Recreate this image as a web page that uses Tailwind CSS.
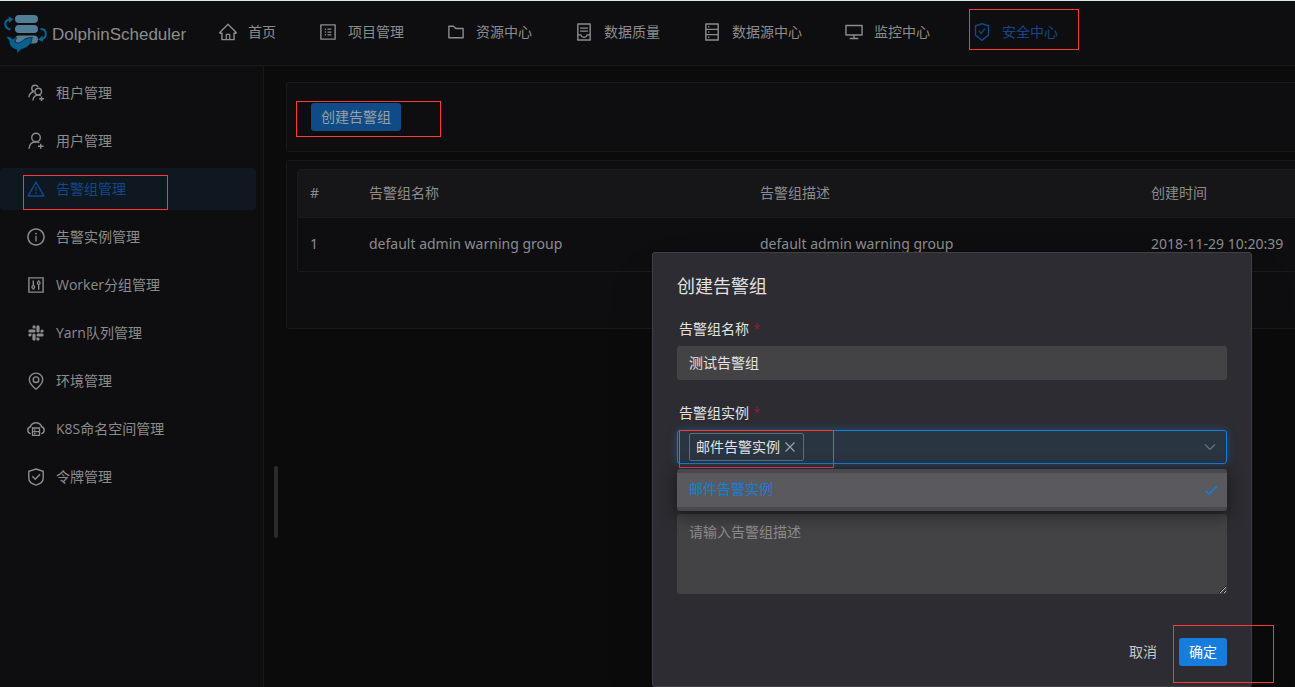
<!DOCTYPE html>
<html lang="zh-CN">
<head>
<meta charset="utf-8">
<meta name="viewport" content="width=device-width, initial-scale=1">
<title>DolphinScheduler</title>
<script src="https://cdn.jsdelivr.net/npm/@tailwindcss/browser@4"></script>
</head>
<body class="relative flex h-screen flex-col overflow-hidden border-t border-[#dfe6e6] bg-[#0b0b0b] font-['Open_Sans','Noto_Sans_CJK_SC',sans-serif] text-sm text-[#8c8c8d]">

<!-- Top bar -->
<header class="flex h-[65px] shrink-0 items-center border-b border-[#1a1a1c] bg-[#0e0e10] pb-0.5">
  <a href="#" class="flex w-[218px] shrink-0 items-center gap-1 pl-1 pt-0.5 font-['Liberation_Sans',sans-serif] text-[17px]">
    <svg class="h-11 w-11" viewBox="0 0 44 44" aria-hidden="true">
      <g fill="#527d94">
        <rect x="11" y="4" width="23" height="8" rx="4"/>
        <rect x="11" y="14" width="23" height="8" rx="4"/>
        <rect x="11" y="24.500" width="23" height="8" rx="4"/>
      </g>
      <path d="M6.500 18.500C-.5 17-.5 9 6 8.500M36.500 18c6.500 0 7.500 8.500.500 10.500" fill="none" stroke="#0a618f" stroke-width="2"/>
      <path d="M4.500 5.500 9.500 8 5 12zM38.500 24.500 34 28.500l5 2.500z" fill="#0a618f"/>
      <path d="M2 25c3 .3 5.500 1.500 6.500 3.200 1.500-.9 3-1.400 4-1.700-.3 1.800-1 2.800-2 3.800 2 2.700 5.500 1.700 8.500-.8 1.500-1.500 3.500-2.500 6-2.700 1.300-.3 2.500-.5 3.500-.3-.5.700-.6 1.500-.6 2.200-.9 4.300-3.500 7-7.400 8.600-1 .6-2.500.9-3.500 1.200-1.500 1.500-2.200 2.500-3.500 4-.6-1.300-.8-2.500-.7-3.700C8.500 38 5 34.500 5.300 30 4 28.500 2.800 27 2 25z" fill="#0a618f" stroke="#0e0e10" stroke-width=".6"/>
    </svg>
    <span class="pt-1">DolphinScheduler</span>
  </a>
  <nav class="flex items-center gap-[42px] whitespace-nowrap" aria-label="主导航">
    <a href="#" class="flex items-center gap-2.5">
      <svg class="size-5" viewBox="0 0 1024 1024" fill="currentColor" aria-hidden="true"><path d="M946.500 505L534.200 92.900a31.500 31.500 0 0 0-44.400 0L77.500 505a63.900 63.900 0 0 0-18.800 46c.4 35.200 29.700 63.300 64.900 63.300h42.500V940h691.800V614.300h43.400c17.100 0 33.200-6.700 45.300-18.800a63.600 63.600 0 0 0 18.700-45.300c0-17-6.700-33.100-18.800-45.200zM568 868H456V664h112v204zm217.900-325.700V868H632V640c0-22.100-17.900-40-40-40H432c-22.100 0-40 17.900-40 40v228H238.100V542.300h-96l370-369.700L882 542.300h-96.100z"/></svg>
      <span>首页</span>
    </a>
    <a href="#" class="flex items-center gap-2.5">
      <svg class="size-5" viewBox="0 0 1024 1024" fill="currentColor" aria-hidden="true"><path d="M880 112H144c-17.700 0-32 14.300-32 32v736c0 17.700 14.300 32 32 32h736c17.700 0 32-14.300 32-32V144c0-17.700-14.300-32-32-32zm-40 728H184V184h656v656zM484 336h200v64H484zM484 480h200v64H484zM484 624h200v64H484zM340 368a40 40 0 1 0 80 0 40 40 0 1 0-80 0zm0 144a40 40 0 1 0 80 0 40 40 0 1 0-80 0zm0 144a40 40 0 1 0 80 0 40 40 0 1 0-80 0z"/></svg>
      <span>项目管理</span>
    </a>
    <a href="#" class="flex items-center gap-2.5">
      <svg class="size-5" viewBox="0 0 1024 1024" fill="currentColor" aria-hidden="true"><path d="M880 298.400H521L403.700 186.200a8.150 8.150 0 0 0-5.500-2.200H144c-17.700 0-32 14.300-32 32v592c0 17.700 14.300 32 32 32h736c17.700 0 32-14.300 32-32V330.400c0-17.700-14.300-32-32-32zM840 768H184V256h188.500l119.600 114.400H840V768z"/></svg>
      <span>资源中心</span>
    </a>
    <a href="#" class="flex items-center gap-2.5">
      <svg class="size-5" viewBox="0 0 1024 1024" fill="currentColor" aria-hidden="true"><path d="M832 64H192c-17.700 0-32 14.300-32 32v832c0 17.700 14.300 32 32 32h640c17.700 0 32-14.300 32-32V96c0-17.700-14.300-32-32-32zm-40 824H232V687h97.900c11.600 32.800 32 62.300 59.100 84.700 34.500 28.500 78.200 44.300 123 44.300s88.500-15.700 123-44.300c27.100-22.400 47.500-51.900 59.100-84.700H792v201zm0-264H643.600l-5.200 24.700C626.400 708.500 573.200 752 512 752s-114.400-43.500-126.500-103.300l-5.200-24.700H232V136h560v488zM312 277h400v64H312zM312 437h400v64H312z"/></svg>
      <span>数据质量</span>
    </a>
    <a href="#" class="flex items-center gap-2.5">
      <svg class="size-5" viewBox="0 0 1024 1024" fill="currentColor" aria-hidden="true"><path d="M832 64H192c-17.700 0-32 14.300-32 32v832c0 17.700 14.300 32 32 32h640c17.700 0 32-14.300 32-32V96c0-17.700-14.300-32-32-32zm-600 72h560v208H232V136zm560 480H232V408h560v208zm0 272H232V680h560v208zM304 240a40 40 0 1 0 80 0 40 40 0 1 0-80 0zm0 272a40 40 0 1 0 80 0 40 40 0 1 0-80 0zm0 272a40 40 0 1 0 80 0 40 40 0 1 0-80 0z"/></svg>
      <span>数据源中心</span>
    </a>
    <a href="#" class="flex items-center gap-2.5">
      <svg class="size-5" viewBox="0 0 1024 1024" fill="currentColor" aria-hidden="true"><path d="M928 140H96c-17.700 0-32 14.300-32 32v496c0 17.700 14.300 32 32 32h380v112H304c-8.800 0-16 7.200-16 16v48c0 4.400 3.600 8 8 8h432c4.400 0 8-3.600 8-8v-48c0-8.800-7.200-16-16-16H548V700h380c17.700 0 32-14.300 32-32V172c0-17.700-14.300-32-32-32zm-40 488H136V212h752v416z"/></svg>
      <span>监控中心</span>
    </a>
    <a href="#" class="relative flex items-center gap-2.5 text-[#10498a]" aria-current="page">
      <svg class="size-5" viewBox="0 0 1024 1024" fill="currentColor" aria-hidden="true"><path d="M866.900 169.900L527.100 54.100C523 52.700 517.500 52 512 52s-11 .7-15.100 2.100L157.100 169.900c-8.300 2.800-15.100 12.400-15.100 21.200v482.400c0 8.800 5.700 20.400 12.600 25.900L499.300 968c3.500 2.700 8 4.100 12.600 4.100s9.200-1.400 12.600-4.100l344.700-268.600c6.900-5.400 12.600-17 12.600-25.900V191.100c.2-8.800-6.600-18.300-14.900-21.200zM810 654.300L512 886.500 214 654.300V226.700l298-101.600 298 101.600v427.600zm-405.800-201c-3-4.100-7.800-6.600-13-6.600H336c-6.500 0-10.300 7.400-6.500 12.700l126.400 174a16.100 16.100 0 0 0 26 0l212.600-292.700c3.800-5.300 0-12.700-6.500-12.700h-55.200c-5.100 0-10 2.500-13 6.600L468.900 542.400l-64.700-89.100z"/></svg>
      <span>安全中心</span>
      <span class="pointer-events-none absolute -left-[3px] -right-[21px] -top-[13px] h-[41px] border border-[#ff3a36]"></span>
    </a>
  </nav>
</header>

<div class="flex min-h-0 flex-1">
  <!-- Side menu -->
  <aside class="w-[264px] shrink-0 border-r border-[#1a1a1c] bg-[#0e0e10] pr-[7px] pt-1.5">
    <nav class="flex flex-col gap-1.5" aria-label="安全中心">
      <a href="#" class="flex h-[42px] items-center gap-2.5 pl-[26px]">
        <svg class="size-5" viewBox="0 0 20 20" fill="none" stroke="currentColor" stroke-width="1.400" aria-hidden="true"><circle cx="12.200" cy="8.600" r="3.300"/><path d="M6.900 17.500c.3-3.200 2.200-5.400 5.300-5.400 1 0 1.900.2 2.600.6M15.500 13.500v4.600M13.200 15.800h4.700M12.200 3.900C11.500 2.800 10.500 2.200 9.200 2.200c-2 0-3.400 1.400-3.400 3.200 0 1.500.9 2.700 2.300 3.100C5 9.200 3.200 11.300 2.900 14.300"/></svg>
        <span>租户管理</span>
      </a>
      <a href="#" class="flex h-[42px] items-center gap-2.5 pl-[26px]">
        <svg class="size-5" viewBox="0 0 20 20" fill="none" stroke="currentColor" stroke-width="1.400" aria-hidden="true"><circle cx="10" cy="6.500" r="4.300"/><path d="M3 17.700c.4-4.200 3-6.900 7-6.900 1.300 0 2.400.3 3.400.8M14.700 12.800v5M12 15.300h5.500"/></svg>
        <span>用户管理</span>
      </a>
      <a href="#" class="relative flex h-[42px] items-center gap-2.5 rounded-[3px] bg-[#0f1720] pl-[26px] text-[#10498a]" aria-current="page">
        <svg class="size-5" viewBox="0 0 1024 1024" fill="currentColor" aria-hidden="true"><path d="M464 720a48 48 0 1 0 96 0 48 48 0 1 0-96 0zm16-304v184c0 4.400 3.600 8 8 8h48c4.400 0 8-3.600 8-8V416c0-4.400-3.600-8-8-8h-48c-4.400 0-8 3.600-8 8zm475.700 440l-416-720c-6.200-10.700-16.900-16-27.700-16s-21.600 5.300-27.700 16l-416 720C56 877.400 71.400 904 96 904h832c24.600 0 40-26.600 27.700-48zm-783.500-27.900L512 239.900l339.800 588.200H172.200z"/></svg>
        <span>告警组管理</span>
        <span class="pointer-events-none absolute left-[23px] top-[7px] h-[35px] w-[145px] border border-[#ff3a36]"></span>
      </a>
      <a href="#" class="flex h-[42px] items-center gap-2.5 pl-[26px]">
        <svg class="size-5" viewBox="0 0 1024 1024" fill="currentColor" aria-hidden="true"><path d="M512 64C264.600 64 64 264.600 64 512s200.600 448 448 448 448-200.600 448-448S759.400 64 512 64zm0 820c-205.400 0-372-166.600-372-372s166.600-372 372-372 372 166.600 372 372-166.600 372-372 372z"/><path d="M464 336a48 48 0 1 0 96 0 48 48 0 1 0-96 0zm72 112h-48c-4.400 0-8 3.600-8 8v272c0 4.400 3.600 8 8 8h48c4.400 0 8-3.600 8-8V456c0-4.400-3.600-8-8-8z"/></svg>
        <span>告警实例管理</span>
      </a>
      <a href="#" class="flex h-[42px] items-center gap-2.5 pl-[26px]">
        <svg class="size-5" viewBox="0 0 20 20" fill="none" stroke="currentColor" stroke-width="1.400" aria-hidden="true"><path d="M2.900 2.900h14.200v14.200H2.900zM7.300 5.500v5M7.300 13.500v1.200M12.700 5.300v1.200M12.700 9.500v5.200"/><circle cx="7.300" cy="12" r="1.400" stroke-width="1.200"/><circle cx="12.700" cy="8" r="1.400" stroke-width="1.200"/></svg>
        <span>Worker分组管理</span>
      </a>
      <a href="#" class="flex h-[42px] items-center gap-2.5 pl-[26px]">
        <svg class="size-5" viewBox="0 0 20 20" fill="currentColor" aria-hidden="true">
          <rect x="10.400" y="2.300" width="3.200" height="7.200" rx="1.600"/><rect x="10.500" y="10.400" width="7.200" height="3.200" rx="1.600"/><rect x="6.400" y="10.500" width="3.200" height="7.200" rx="1.600"/><rect x="2.300" y="6.400" width="7.200" height="3.200" rx="1.600"/>
          <path d="M8 2.300a1.600 1.600 0 0 1 1.600 1.600v1.600H8a1.600 1.600 0 0 1 0-3.200zM17.700 8a1.600 1.600 0 0 1-1.600 1.600h-1.600V8a1.600 1.600 0 0 1 3.200 0zM12 17.700a1.600 1.600 0 0 1-1.600-1.600v-1.600H12a1.600 1.600 0 0 1 0 3.200zM2.300 12a1.600 1.600 0 0 1 1.600-1.600h1.600V12a1.600 1.600 0 0 1-3.200 0z"/>
        </svg>
        <span>Yarn队列管理</span>
      </a>
      <a href="#" class="flex h-[42px] items-center gap-2.5 pl-[26px]">
        <svg class="size-5" viewBox="0 0 20 20" fill="none" stroke="currentColor" stroke-width="1.400" aria-hidden="true"><path d="M10 18.200C5.800 15 3.300 12 3.300 8.600 3.300 4.800 6.300 2.100 10 2.100s6.700 2.700 6.700 6.500c0 3.400-2.500 6.400-6.700 9.600z"/><circle cx="10" cy="8.700" r="2.800"/></svg>
        <span>环境管理</span>
      </a>
      <a href="#" class="flex h-[42px] items-center gap-2.5 pl-[26px]">
        <svg class="size-5" viewBox="0 0 20 20" fill="none" stroke="currentColor" stroke-width="1.400" aria-hidden="true"><path d="M4.800 14.600C3 14.300 1.800 12.900 1.800 11.200c0-1.700 1-3 2.600-3.400C5.200 5.300 7.300 3.700 10 3.700s4.800 1.600 5.600 4.100c1.600.4 2.600 1.700 2.600 3.400 0 1.700-1.200 3.100-3 3.400"/><path stroke-width="1.300" d="M6.500 9h7v7.300h-7zM6.500 12.600h7M8 10.800h1.400M8 14.500h1.400"/></svg>
        <span>K8S命名空间管理</span>
      </a>
      <a href="#" class="flex h-[42px] items-center gap-2.5 pl-[26px]">
        <svg class="size-5" viewBox="0 0 20 20" fill="none" stroke="currentColor" stroke-width="1.400" aria-hidden="true"><path d="M10 2l7.200 2.300v7c0 3.500-3 5.700-7.200 6.900-4.200-1.200-7.200-3.400-7.200-6.900v-7z"/><path d="M6.300 9.300l3 3 4.700-5"/></svg>
        <span>令牌管理</span>
      </a>
    </nav>
  </aside>

  <!-- Scroll handle column -->
  <div class="w-[22px] shrink-0 pl-2.5 pt-[400px]">
    <div class="h-[72px] w-1 rounded-full bg-[#2b2b2b]"></div>
  </div>

  <!-- Page content; the list is wider than the window and runs off its right edge -->
  <main class="min-w-0 flex-1 overflow-hidden pt-4">
    <div class="flex w-[1600px] flex-col gap-2">
      <section class="h-[70px] rounded-[3px] border border-[#1a1a1c] bg-[#0e0e10] px-6 py-5">
        <div class="relative inline-block">
          <button type="button" class="block h-7 rounded-[3px] bg-[#0f4c87] px-2.5 text-[#9a9fa5]">创建告警组</button>
          <span class="pointer-events-none absolute -left-[15px] -right-10 -top-0.5 h-9 border border-[#ff3a36]"></span>
        </div>
      </section>
      <section class="h-[169px] rounded-[3px] border border-[#1a1a1c] bg-[#0e0e10] px-2.5 py-2">
        <div class="overflow-hidden rounded-[3px] border border-[#1a1a1c]">
          <table class="w-full table-fixed text-left font-['Noto_Sans','Noto_Sans_CJK_SC',sans-serif]">
            <thead class="bg-[#161618]">
              <tr class="h-[47px] border-b border-[#1a1a1c]">
                <th class="w-[59px] pl-3 font-normal">#</th>
                <th class="w-[391px] pl-3 font-normal">告警组名称</th>
                <th class="w-[391px] pl-3 font-normal">告警组描述</th>
                <th class="pl-3 font-normal">创建时间</th>
              </tr>
            </thead>
            <tbody>
              <tr class="h-[54px]">
                <td class="pl-3">1</td>
                <td class="pl-3">default admin warning group</td>
                <td class="pl-3">default admin warning group</td>
                <td class="pl-3">2018-11-29 10:20:39</td>
              </tr>
            </tbody>
          </table>
        </div>
      </section>
    </div>
  </main>
</div>

<!-- Create-group dialog -->
<div role="dialog" aria-modal="true" aria-labelledby="dlg-title" class="absolute left-[652px] top-[251px] w-[600px] rounded-[3px] border border-[#3f3f44] bg-[#2c2c32] text-[#e2e2e3] shadow-2xl">
  <form class="px-6 pb-5 pt-[19px]">
    <h2 id="dlg-title" class="mb-5 text-lg leading-7">创建告警组</h2>

    <label for="group-name" class="block h-[26px] px-0.5 leading-[18px]">告警组名称 <span class="text-[#8d1f27]">*</span></label>
    <input id="group-name" type="text" value="测试告警组" class="block h-[34px] w-full rounded-[3px] bg-[#434346] px-3 pb-0.5 outline-none">

    <label for="group-instance" class="mt-6 block h-[26px] px-0.5 leading-[18px]">告警组实例 <span class="text-[#8d1f27]">*</span></label>
    <div class="relative">
      <div class="flex h-[34px] items-center rounded-[3px] border border-[#177ddc] bg-[#2a3542] pl-[11px] pr-2.5 shadow-[0_0_8px_0_rgba(23,125,220,0.4)]">
        <span class="flex h-7 items-center gap-[3px] rounded-[2px] border border-[#626c76] px-1.5">
          邮件告警实例
          <button type="button" aria-label="移除 邮件告警实例" class="text-[#9da3a9]">
            <svg class="size-3.5" viewBox="0 0 14 14" fill="none" stroke="currentColor" stroke-width="1.200" aria-hidden="true"><path d="M2.500 2.500l9 9M11.500 2.500l-9 9"/></svg>
          </button>
        </span>
        <input id="group-instance" type="text" role="combobox" aria-expanded="true" aria-controls="instance-list" class="h-full min-w-0 flex-1 bg-transparent outline-none">
        <svg class="size-3 text-[#6b747e]" viewBox="0 0 12 12" fill="none" stroke="currentColor" stroke-width="1.200" aria-hidden="true"><path d="M1 3.500l5 5 5-5"/></svg>
      </div>
      <span class="pointer-events-none absolute left-0.5 top-0 h-[38px] w-[155px] border border-[#ff3a36]"></span>
      <ul id="instance-list" role="listbox" class="absolute inset-x-0 top-[39px] rounded-[3px] bg-[#48484e] py-1 shadow-[0_4px_16px_2px_rgba(0,0,0,0.4)]">
        <li role="option" aria-selected="true" class="flex h-[34px] items-center justify-between bg-[#5a5a5e] pb-0.5 pl-3 pr-2 text-[#177ddc]">
          邮件告警实例
          <svg class="size-4" viewBox="0 0 16 16" fill="none" stroke="currentColor" stroke-width="1.600" aria-hidden="true"><path d="M2.500 9.500l3.500 3.500 8-8"/></svg>
        </li>
      </ul>
    </div>

    <textarea aria-label="告警组描述" placeholder="请输入告警组描述" class="mt-[50px] block h-20 w-full resize-y rounded-[3px] bg-[#434346] px-3 py-2 leading-5 outline-none placeholder:text-[#8b8b8d]"></textarea>

    <div class="mt-11 flex justify-end gap-3">
      <button type="button" class="h-7 px-2.5 text-[#c8c8ca]">取消</button>
      <div class="relative">
        <button type="submit" class="block h-7 rounded-[3px] bg-[#177ddc] px-2.5 text-white">确定</button>
        <span class="pointer-events-none absolute -left-1.5 -right-[47px] -top-[13px] h-[58px] border border-[#ff3a36]"></span>
      </div>
    </div>
  </form>
</div>
</body>
</html>
